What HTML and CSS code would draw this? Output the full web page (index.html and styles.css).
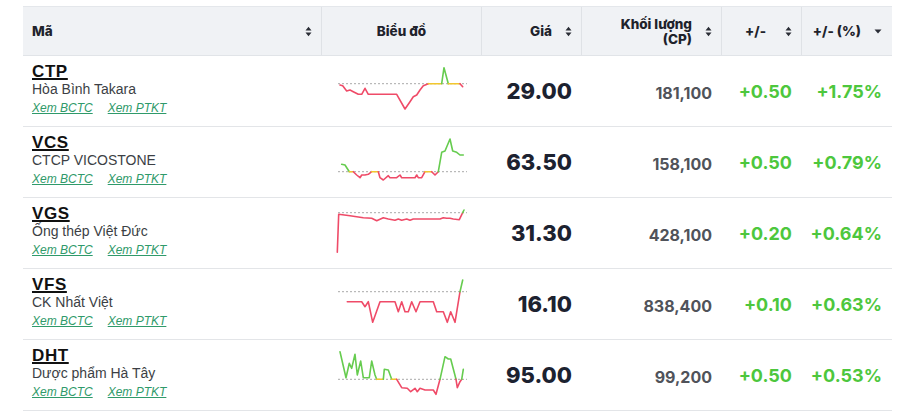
FILE: index.html
```html
<!DOCTYPE html>
<html lang="vi">
<head>
<meta charset="utf-8">
<link rel="stylesheet" href="styles.css">
</head>
<body>
<div class="table">
  <div class="head">
    <div class="hc hc-left"><span>Mã</span><svg class="sort" viewBox="0 0 7 11"><path d="M0.5 4.5 L3.5 0.8 L6.5 4.5 Z M0.5 6.5 L3.5 10.2 L6.5 6.5 Z"/></svg></div>
    <div class="hc hc-center"><span>Biểu đồ</span></div>
    <div class="hc"><span>Giá</span><svg class="sort" viewBox="0 0 7 11"><path d="M0.5 4.5 L3.5 0.8 L6.5 4.5 Z M0.5 6.5 L3.5 10.2 L6.5 6.5 Z"/></svg></div>
    <div class="hc"><span class="two"><span class="ln">Khối lượng</span><span class="ln">(CP)</span></span><svg class="sort" viewBox="0 0 7 11"><path d="M0.5 4.5 L3.5 0.8 L6.5 4.5 Z M0.5 6.5 L3.5 10.2 L6.5 6.5 Z"/></svg></div>
    <div class="hc hc-wide"><span>+/-</span><svg class="sort" viewBox="0 0 7 11"><path d="M0.5 4.5 L3.5 0.8 L6.5 4.5 Z M0.5 6.5 L3.5 10.2 L6.5 6.5 Z"/></svg></div>
    <div class="hc hc-last"><span>+/- (%)</span><svg class="caret" viewBox="0 0 8 5"><path d="M0.5 0.5 L7.5 0.5 L4 4.5 Z"/></svg></div>
  </div>

  <div class="row">
    <div class="c-name">
      <a class="ticker">CTP</a>
      <div class="company">Hòa Bình Takara</div>
      <div class="links"><a>Xem BCTC</a><a>Xem PTKT</a></div>
    </div>
    <div class="c-chart">
      <svg class="spark" viewBox="0 0 130 50" width="130" height="50">
        <line class="base" x1="1" y1="17.7" x2="130" y2="17.7"/>
        <polyline class="r" points="3,19 5.7,19.7 9.7,25 13,24 16.3,25.7 21.3,28.3 24.7,28.3 28,22.3 31.3,28.3 59.7,28.3 68,43 73,35.7 76.3,30.7 79.7,29 83,24 86.3,19.7 91.3,17.7"/>
        <polyline class="y" points="91.3,17.7 104.7,17.7"/>
        <polyline class="g" points="104.7,17.7 107,1.7 111.3,17.7"/>
        <polyline class="y" points="111.3,17.7 123,17.7"/>
        <polyline class="r" points="123,17.7 125.7,20.7"/>
      </svg>
    </div>
    <div class="c-price">29.00</div>
    <div class="c-vol">181,100</div>
    <div class="c-chg">+0.50</div>
    <div class="c-chg">+1.75%</div>
  </div>

  <div class="row">
    <div class="c-name">
      <a class="ticker">VCS</a>
      <div class="company">CTCP VICOSTONE</div>
      <div class="links"><a>Xem BCTC</a><a>Xem PTKT</a></div>
    </div>
    <div class="c-chart">
      <svg class="spark" viewBox="0 0 130 50" width="130" height="50">
        <line class="base" x1="1" y1="34.7" x2="130" y2="34.7"/>
        <polyline class="g" points="4.7,27.3 8,28 12.3,34.7"/>
        <polyline class="y" points="12.3,34.7 16.3,34.7"/>
        <polyline class="r" points="16.3,34.7 19.7,38 23,40.7 24.7,38 28,38 31.3,37.3 34.7,34.7"/>
        <polyline class="y" points="34.7,34.7 41.3,34.7"/>
        <polyline class="r" points="41.3,34.7 43,40.7 46.3,43 51.3,38.7 53,40.7 59.7,40.7 63,38 64.7,40.7 78,40.7 79.7,38 81.3,40.7 84.7,40.7 88,34.7"/>
        <polyline class="y" points="88,34.7 94.7,34.7"/>
        <polyline class="r" points="94.7,34.7 98,38 101.3,34.7"/>
        <polyline class="g" points="101.3,34.7 104.7,15.3 108,14 113,2 115.7,14 119.7,15.3 123,18 126.3,18"/>
      </svg>
    </div>
    <div class="c-price">63.50</div>
    <div class="c-vol">158,100</div>
    <div class="c-chg">+0.50</div>
    <div class="c-chg">+0.79%</div>
  </div>

  <div class="row">
    <div class="c-name">
      <a class="ticker">VGS</a>
      <div class="company">Ống thép Việt Đức</div>
      <div class="links"><a>Xem BCTC</a><a>Xem PTKT</a></div>
    </div>
    <div class="c-chart">
      <svg class="spark" viewBox="0 0 130 50" width="130" height="50">
        <line class="base" x1="1" y1="4.7" x2="130" y2="4.7"/>
        <polyline class="r" points="0.3,44.3 1.7,6.3 13,7.7 26.3,9.7 34.7,10.3 39.7,12.7 46.3,9.7 51.3,11 58,12.3 61.3,11 64.7,12.3 69.7,11 73,12.3 76.3,11 103,11 106.3,9.7 109.7,10.3 113,10.3 116.3,11 122.3,11.7 125.7,4.7"/>
        <polyline class="g" points="125.7,4.7 127,2"/>
      </svg>
    </div>
    <div class="c-price">31.30</div>
    <div class="c-vol">428,100</div>
    <div class="c-chg">+0.20</div>
    <div class="c-chg">+0.64%</div>
  </div>

  <div class="row">
    <div class="c-name">
      <a class="ticker">VFS</a>
      <div class="company">CK Nhất Việt</div>
      <div class="links"><a>Xem BCTC</a><a>Xem PTKT</a></div>
    </div>
    <div class="c-chart">
      <svg class="spark" viewBox="0 0 130 50" width="130" height="50">
        <line class="base" x1="1" y1="12.7" x2="130" y2="12.7"/>
        <polyline class="r" points="10.3,22.7 24.7,22.7 28,27.7 31.3,22.7 35.7,43.3 43,22.7 58,22.7 61.3,32.7 64.7,22.7 68,32.7 71.3,32.7 74.7,22.7 79,32.7 83,22.7 96.3,22.7 99.7,32.7 106.3,32.7 110.3,43.3 113.7,32.7 118,43.3 123,12.7"/>
        <polyline class="g" points="123,12.7 125.7,1"/>
      </svg>
    </div>
    <div class="c-price">16.10</div>
    <div class="c-vol">838,400</div>
    <div class="c-chg">+0.10</div>
    <div class="c-chg">+0.63%</div>
  </div>

  <div class="row">
    <div class="c-name">
      <a class="ticker">DHT</a>
      <div class="company">Dược phẩm Hà Tây</div>
      <div class="links"><a>Xem BCTC</a><a>Xem PTKT</a></div>
    </div>
    <div class="c-chart">
      <svg class="spark" viewBox="0 0 130 50" width="130" height="50">
        <line class="base" x1="1" y1="29.3" x2="130" y2="29.3"/>
        <polyline class="g" points="3,1.7 9,27.7 12.3,13.3 14.7,18.3 18,4.3 20.3,25 23.7,11 26.3,27.7 32.3,27.7 34.7,11 38,25 39.7,29.3"/>
        <polyline class="y" points="39.7,29.3 46.3,29.3"/>
        <polyline class="g" points="46.3,29.3 47.3,19.3 51.3,20 54.7,29.3"/>
        <polyline class="y" points="54.7,29.3 59.7,29.3"/>
        <polyline class="r" points="59.7,29.3 64.7,37.7 70.3,38.3 73.7,41.7 78,38.3 80.3,41.7 83,38.3 88,40 96.3,40 99,44.3 103,29.3"/>
        <polyline class="g" points="103,29.3 108,6.7 111.3,9 113.7,9 119,29.3"/>
        <polyline class="r" points="119,29.3 120.3,37.7 123,31.7 124.7,29.3"/>
        <polyline class="g" points="124.7,29.3 126.3,19.3"/>
      </svg>
    </div>
    <div class="c-price">95.00</div>
    <div class="c-vol">99,200</div>
    <div class="c-chg">+0.50</div>
    <div class="c-chg">+0.53%</div>
  </div>
</div>
</body>
</html>
```

FILE: styles.css
```css
html, body {
  margin: 0;
  padding: 0;
  background: #ffffff;
}

body {
  font-family: Inter, "Noto Sans", sans-serif;
  color: #1f2330;
}

.table {
  margin: 6px 0 0 23px;
  width: 869px;
}

.head,
.row {
  display: grid;
  grid-template-columns: 299px 160px 100px 140px 80px 90px;
}

.head {
  height: 50px;
  box-sizing: border-box;
  background: #f0f2f5;
  border-top: 1px solid #e4e7eb;
  border-bottom: 1px solid #e1e4e8;
}

.hc {
  display: flex;
  align-items: center;
  justify-content: flex-end;
  gap: 13px;
  padding: 0 9px;
  border-right: 1px solid #dfe2e6;
  font-size: 13.5px;
  font-weight: 800;
  color: #20222b;
}

.hc-left {
  justify-content: space-between;
}

.hc-center {
  justify-content: center;
}

.hc-wide {
  gap: 19px;
}

.hc-last {
  border-right: none;
  padding-right: 10px;
}

.hc .two {
  display: flex;
  flex-direction: column;
  align-items: flex-end;
  padding-top: 1px;
}

.hc .two .ln {
  display: block;
  line-height: 15px;
}

.sort {
  width: 7px;
  height: 11px;
  fill: #2a2d36;
  flex: none;
}

.caret {
  width: 8px;
  height: 5px;
  fill: #2a2d36;
  flex: none;
}

.row {
  height: 71px;
  box-sizing: border-box;
  border-bottom: 1px solid #e3e5e8;
}

.c-name {
  padding: 6px 9px 0;
  font-family: "Liberation Sans", Arial, sans-serif;
}

.ticker {
  display: inline-block;
  font-size: 17px;
  line-height: 19px;
  font-weight: 700;
  letter-spacing: 0.6px;
  color: #111111;
  text-decoration: underline;
  text-decoration-thickness: 2px;
  text-underline-offset: 1px;
}

.company {
  font-size: 14px;
  line-height: 17px;
  color: #3c3f45;
}

.links {
  display: flex;
  gap: 15px;
  margin-top: 2px;
  font-size: 12px;
  line-height: 16px;
  font-style: italic;
}

.links a {
  color: #2f9a6a;
  text-decoration: underline;
}

.c-chart {
  display: flex;
  align-items: center;
  justify-content: center;
}

.spark {
  display: block;
  overflow: visible;
}

.spark polyline {
  fill: none;
  stroke-width: 1.6;
  stroke-linejoin: round;
  stroke-linecap: round;
}

.spark .r { stroke: #ef4b68; }
.spark .g { stroke: #66cc4f; }
.spark .y { stroke: #f2c72e; }

.spark .base {
  stroke: #a9a9a9;
  stroke-width: 1;
  stroke-dasharray: 2 2;
}

.c-price,
.c-vol,
.c-chg {
  display: flex;
  align-items: center;
  justify-content: flex-end;
  padding-right: 10px;
  font-weight: 700;
}

.c-price {
  font-size: 22px;
  font-weight: 800;
  color: #1c2230;
}

.c-vol {
  padding-top: 4px;
  font-size: 16px;
  color: #50535a;
}

.c-chg {
  font-size: 18px;
  color: #4dc73d;
}
```
